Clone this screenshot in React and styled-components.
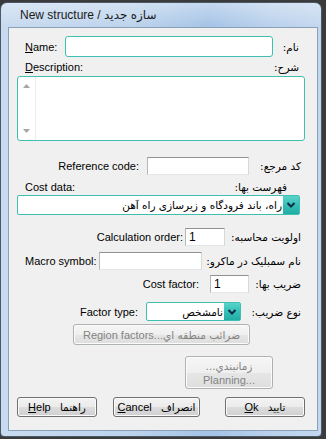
import React from "react";
import styled, { createGlobalStyle } from "styled-components";

const GlobalStyle = createGlobalStyle`
  html, body {
    margin: 0;
    padding: 0;
    background: #3b3b3b;
  }
  body {
    width: 326px;
    height: 439px;
    overflow: hidden;
    font-family: "Liberation Sans", "DejaVu Sans", sans-serif;
    font-size: 11px;
    color: #000;
  }
`;

const Window = styled.div`
  box-sizing: border-box;
  width: 322px;
  height: 435px;
  margin-top: 2px;
  border: 1px solid #4a5868;
  border-radius: 7px 7px 4px 4px;
  padding: 0 3px 5px 7px;
  display: flex;
  flex-direction: column;
  background:
    linear-gradient(180deg, rgba(255, 255, 255, 0.35) 0px, rgba(255, 255, 255, 0) 24px),
    linear-gradient(90deg, #c8daef 0%, #bcd3ec 40%, #a5c3e6 65%, #bad1ec 85%, #c3d7ee 100%);
`;

const TitleBar = styled.div`
  height: 24px;
  display: flex;
  align-items: center;
  padding-left: 12px;
  font-size: 12px;
  color: #1a1a1a;
`;

const Client = styled.div`
  box-sizing: border-box;
  height: 404px;
  border: 1px solid #8aa0b8;
  background: #f0f0f0;
  display: flex;
  flex-direction: column;
`;

const Row = styled.div`
  display: flex;
  align-items: center;
  height: ${(p) => p.$h}px;
  margin-top: ${(p) => p.$top}px;
  padding: 0 16px;
`;

const Block = styled.div`
  display: flex;
  margin-top: ${(p) => p.$top}px;
  padding-left: ${(p) => p.$left || 0}px;
`;

const Left = styled.div`
  flex: 1;
  height: 100%;
  display: flex;
  align-items: center;
  justify-content: flex-end;
`;

const Label = styled.span`
  width: ${(p) => (p.$w ? `${p.$w}px` : "auto")};
  margin-right: ${(p) => p.$gap || 0}px;
  white-space: nowrap;
`;

const Fa = styled.span`
  direction: rtl;
  text-align: right;
  white-space: nowrap;
  font-family: "DejaVu Sans", sans-serif;
  font-size: 10.5px;
  ${(p) => (p.$w ? `width: ${p.$w}px;` : "flex: 1;")}
  padding-right: ${(p) => p.$pr || 0}px;
`;

const TextBox = styled.div`
  box-sizing: border-box;
  width: ${(p) => p.$w}px;
  height: 100%;
  background: #fff;
  border: 1px solid;
  border-color: ${(p) => (p.$teal ? "#3fbfb1" : "#8f9196 #d6d8da #e3e5e7 #b5b7ba")};
  border-radius: ${(p) => (p.$teal ? 3 : 0)}px;
  padding-left: 3px;
  display: flex;
  align-items: center;
  font-size: 12px;
`;

const TextArea = styled.div`
  box-sizing: border-box;
  width: 288px;
  height: 65px;
  background: #fff;
  border: 1px solid #3fbfb1;
  border-radius: 3px;
  display: flex;
`;

const ScrollBar = styled.div`
  width: 17px;
  border-right: 1px solid #ececec;
  display: flex;
  flex-direction: column;
  justify-content: space-between;
  align-items: center;
  padding: 7px 0 7px;
`;

const Select = styled.div`
  box-sizing: border-box;
  width: ${(p) => p.$w}px;
  height: ${(p) => p.$h}px;
  background: #fff;
  border: 1px solid #3fbfb1;
  border-radius: 2px;
  display: flex;
  align-items: stretch;
`;

const SelectText = styled.span`
  flex: 1;
  direction: rtl;
  text-align: right;
  display: flex;
  align-items: center;
  padding-right: 1px;
  font-family: "DejaVu Sans", sans-serif;
  font-size: 10.5px;
  white-space: nowrap;
  overflow: hidden;
`;

const DropButton = styled.span`
  width: 16px;
  display: flex;
  align-items: center;
  justify-content: center;
  background: linear-gradient(180deg, #5ad3ca 0%, #35c0b7 50%, #22ada4 100%);
`;

const Button = styled.div`
  box-sizing: border-box;
  width: ${(p) => p.$w}px;
  height: ${(p) => p.$h}px;
  margin-left: ${(p) => p.$ml || 0}px;
  border: 1px solid ${(p) => (p.$disabled ? "#adb2b5" : "#707070")};
  border-radius: 3px;
  box-shadow: inset 0 0 0 1px #fbfbfb;
  background: ${(p) =>
    p.$disabled
      ? "linear-gradient(180deg, #f6f6f6 0%, #efefef 50%, #e6e6e6 51%, #dedede 100%)"
      : "linear-gradient(180deg, #f3f3f3 0%, #ebebeb 50%, #dddddd 51%, #cfcfcf 100%)"};
  color: ${(p) => (p.$disabled ? "#838383" : "#000")};
  display: flex;
  flex-direction: column;
  align-items: center;
  justify-content: center;
  line-height: 14px;
  white-space: nowrap;
`;

const BtnFa = styled.span`
  font-family: "DejaVu Sans", sans-serif;
  font-size: 10.5px;
  direction: rtl;
`;

const Chevron = () => (
  <svg width="10" height="8" viewBox="0 0 10 8">
    <path d="M1.5 2 L5 5.5 L8.5 2" fill="none" stroke="#13294a" strokeWidth="2" />
  </svg>
);

const Arrow = ({ up }) => (
  <svg width="7" height="4" viewBox="0 0 7 4">
    <path d={up ? "M0 4 L3.5 0 L7 4 Z" : "M0 0 L3.5 4 L7 0 Z"} fill="#a6a6a6" />
  </svg>
);

function App() {
  return (
    <>
      <GlobalStyle />
      <Window>
        <TitleBar>New structure / سازه جدید</TitleBar>
        <Client>
          <Row $top={8} $h={21}>
            <Label $w={40}>
              <u>N</u>ame:
            </Label>
            <TextBox $w={208} $teal />
            <Fa $pr={2}>نام:</Fa>
          </Row>

          <Row $top={3} $h={14}>
            <Label>
              <u>D</u>escription:
            </Label>
            <Fa $pr={2}>شرح:</Fa>
          </Row>

          <Block $top={2} $left={8}>
            <TextArea>
              <ScrollBar>
                <Arrow up />
                <Arrow />
              </ScrollBar>
            </TextArea>
          </Block>

          <Row $top={16} $h={18}>
            <Left>
              <Label $gap={8}>Reference code:</Label>
              <TextBox $w={102} />
            </Left>
            <Fa $w={52}>کد مرجع:</Fa>
          </Row>

          <Row $top={5} $h={14}>
            <Label>Cost data:</Label>
            <Fa $pr={14}>فهرست بها:</Fa>
          </Row>

          <Block $top={1} $left={8}>
            <Select $w={283} $h={20}>
              <SelectText>راه، باند فرودگاه و زیرسازی راه آهن</SelectText>
              <DropButton>
                <Chevron />
              </DropButton>
            </Select>
          </Block>

          <Row $top={13} $h={18}>
            <Left>
              <Label $gap={2}>Calculation order:</Label>
              <TextBox $w={40}>1</TextBox>
            </Left>
            <Fa $w={76}>اولویت محاسبه:</Fa>
          </Row>

          <Row $top={6} $h={18}>
            <Left>
              <Label $gap={2}>Macro symbol:</Label>
              <TextBox $w={103} />
            </Left>
            <Fa $w={100}>نام سمبلیک در ماکرو:</Fa>
          </Row>

          <Row $top={5} $h={18}>
            <Left>
              <Label $gap={11}>Cost factor:</Label>
              <TextBox $w={39}>1</TextBox>
            </Left>
            <Fa $w={52}>ضریب بها:</Fa>
          </Row>

          <Row $top={9} $h={19}>
            <Left>
              <Label $gap={8}>Factor type:</Label>
              <Select $w={95} $h={19}>
                <SelectText>نامشخص</SelectText>
                <DropButton>
                  <Chevron />
                </DropButton>
              </Select>
            </Left>
            <Fa $w={60}>نوع ضریب:</Fa>
          </Row>

          <Block $top={3} $left={64}>
            <Button $w={177} $h={21} $disabled>
              <span>
                Region factors...<BtnFa>ضرائب منطقه اي</BtnFa>
              </span>
            </Button>
          </Block>

          <Block $top={11} $left={176}>
            <Button $w={88} $h={33} $disabled>
              <BtnFa>زمانبندي...</BtnFa>
              <span>Planning...</span>
            </Button>
          </Block>

          <Block $top={8} $left={8}>
            <Button $w={80} $h={20}>
              <span>
                <u>H</u>elp&nbsp;&nbsp;&nbsp;<BtnFa>راهنما</BtnFa>
              </span>
            </Button>
            <Button $w={87} $h={20} $ml={16}>
              <span>
                <u>C</u>ancel&nbsp;&nbsp;&nbsp;<BtnFa>انصراف</BtnFa>
              </span>
            </Button>
            <Button $w={80} $h={20} $ml={25}>
              <span>
                <u>O</u>k&nbsp;&nbsp;&nbsp;<BtnFa>تایید</BtnFa>
              </span>
            </Button>
          </Block>
        </Client>
      </Window>
    </>
  );
}

export default App;
